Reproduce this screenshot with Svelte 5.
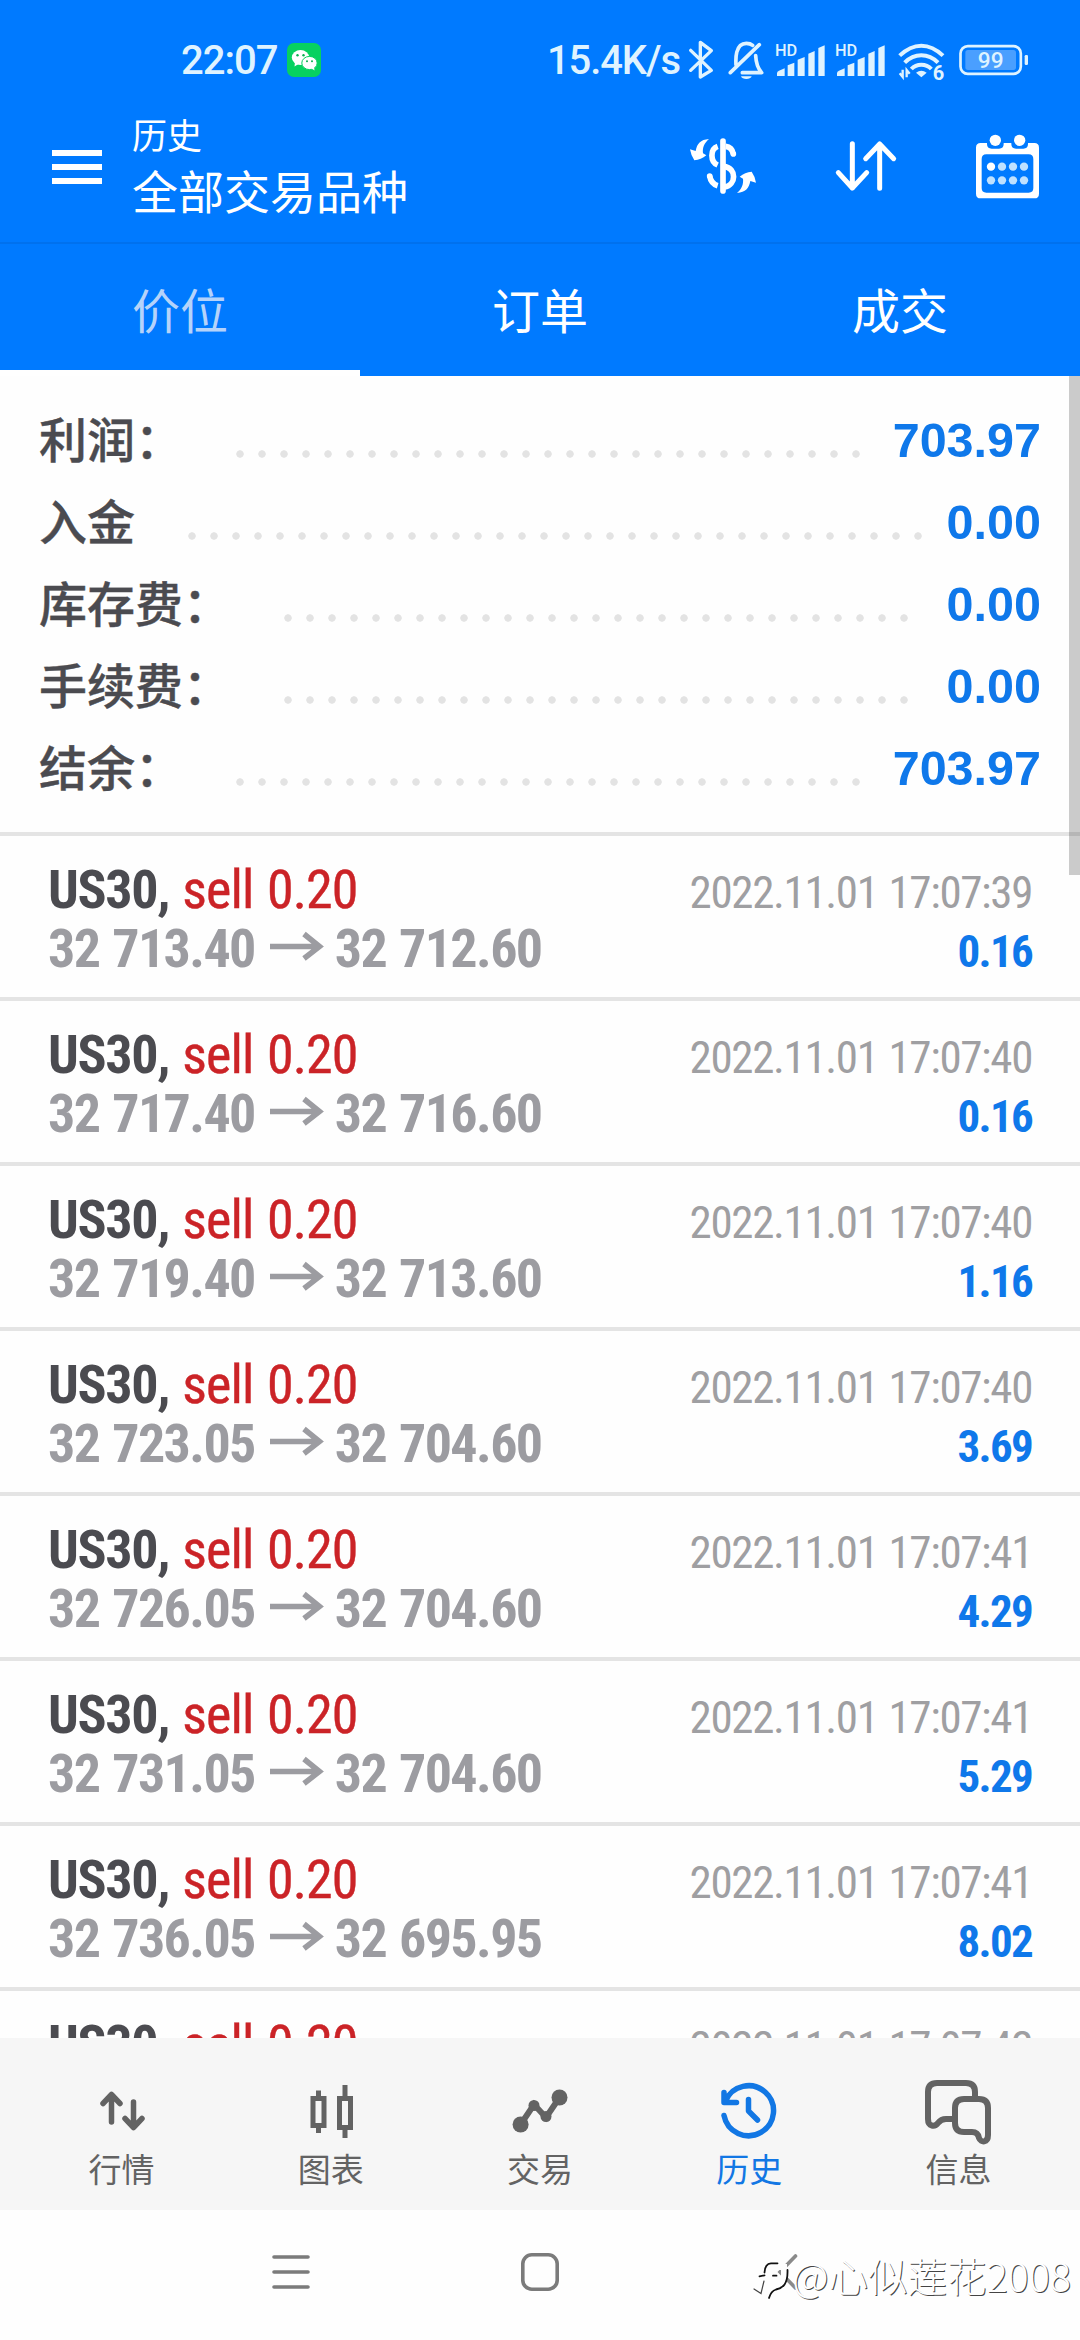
<script>
	const summary = [
		{ label: '利润：', value: '703.97', dots: 29 },
		{ label: '入金', value: '0.00', dots: 34 },
		{ label: '库存费：', value: '0.00', dots: 29 },
		{ label: '手续费：', value: '0.00', dots: 29 },
		{ label: '结余：', value: '703.97', dots: 29 }
	];

	const deals = [
		{ open: '32 713.40', close: '32 712.60', time: '2022.11.01 17:07:39', profit: '0.16' },
		{ open: '32 717.40', close: '32 716.60', time: '2022.11.01 17:07:40', profit: '0.16' },
		{ open: '32 719.40', close: '32 713.60', time: '2022.11.01 17:07:40', profit: '1.16' },
		{ open: '32 723.05', close: '32 704.60', time: '2022.11.01 17:07:40', profit: '3.69' },
		{ open: '32 726.05', close: '32 704.60', time: '2022.11.01 17:07:41', profit: '4.29' },
		{ open: '32 731.05', close: '32 704.60', time: '2022.11.01 17:07:41', profit: '5.29' },
		{ open: '32 736.05', close: '32 695.95', time: '2022.11.01 17:07:41', profit: '8.02' },
		{ open: '', close: '', time: '2022.11.01 17:07:42', profit: '' }
	];

	const tabs = ['价位', '订单', '成交'];
	let activeTab = $state(0);
</script>

{#snippet signal()}
	<svg width="50" height="42" viewBox="0 0 150 126" fill="currentColor">
		<text x="0" y="52" class="hd">HD</text>
		<path
			d="M6 103Q6 97 12 95L29 88V111H6zM38 79L58 71V111H38zM68 62L89 54V111H68zM100 44L119 36V111H100zM130 27L149 19V111H130z"
		/>
	</svg>
{/snippet}

<div class="screen">
	<!-- System status bar -->
	<div class="status">
		<span class="clock">22:07</span>
		<svg class="wechat" width="34" height="34" viewBox="0 0 34 34">
			<rect width="34" height="34" rx="7" fill="#07d160" />
			<ellipse cx="13.5" cy="14.5" rx="8.7" ry="7.5" fill="#fff" />
			<path d="M8 19l-.5 4.5 4-2.5z" fill="#fff" />
			<ellipse cx="22.5" cy="20" rx="7.7" ry="6.6" fill="#fff" stroke="#07d160" stroke-width="1" />
			<path d="M24 25l3.5 2.5-.5-4z" fill="#fff" />
			<g fill="#07b050">
				<circle cx="10.5" cy="12.3" r="1.2" />
				<circle cx="16.5" cy="12.3" r="1.2" />
				<circle cx="20" cy="18.3" r="1" />
				<circle cx="25" cy="18.3" r="1" />
			</g>
		</svg>
		<div class="indicators">
			<span class="speed">15.4K/s</span>
			<svg width="28" height="42" viewBox="0 0 84 126" fill="none" stroke="currentColor">
				<path d="M11 34 73 94 40 114V10L73 35 11 94" stroke-width="10" stroke-linejoin="round" stroke-linecap="round" />
			</svg>
			<svg class="bell" width="38" height="42" viewBox="0 0 114 126" fill="none" stroke="currentColor" stroke-width="11">
				<path d="M10 101 97 17M27 78C26 62 24 13 58 13q12 0 19 6M86 50C87 70 90 86 104 101H46" stroke-linecap="round" stroke-linejoin="round" />
				<path d="M42 112h32c-3 11-29 11-32 0z" fill="currentColor" stroke="none" />
			</svg>
			{@render signal()}
			{@render signal()}
			<svg class="wifi" width="48" height="42" viewBox="0 0 144 126" fill="none" stroke="currentColor" stroke-width="12">
				<path d="M5 50Q36 20 70 20T135 50M20 71Q42 49 70 49T120 71M40 90Q52 77 70 77T100 90" />
				<path d="M54 101Q70 90 86 101L70 115z" fill="currentColor" stroke="none" />
				<path d="M14 92v22L5 103M26 115V93l9 11" stroke-width="7" />
				<text x="104" y="124" class="six">6</text>
			</svg>
			<svg width="71" height="42" viewBox="0 0 213 126" fill="none">
				<rect x="7.5" y="21.5" width="181" height="83" rx="22" stroke="currentColor" stroke-width="8" />
				<rect x="22" y="33" width="152" height="60" rx="8" fill="#4a9fff" />
				<rect x="200" y="48" width="10" height="30" rx="4" fill="currentColor" />
				<text x="98" y="87" class="charge">99</text>
			</svg>
		</div>
	</div>

	<header class="toolbar">
		<div class="burger"><i></i><i></i><i></i></div>
		<div class="titles">
			<div class="title">历史</div>
			<div class="subtitle">全部交易品种</div>
		</div>
		<div class="actions">
			<svg width="68" height="58" viewBox="0 0 204 174" fill="none" stroke="#fff" stroke-width="17">
				<path d="M102 12V162" stroke-linecap="round" />
				<path d="M86 28C63 36 63 74 86 84M110 28Q129 30 133 51M106 88C143 94 143 144 106 150M62 117Q66 140 86 146" />
				<circle cx="133" cy="51" r="8.5" fill="#fff" stroke="none" />
				<circle cx="62" cy="117" r="8.5" fill="#fff" stroke="none" />
				<g fill="#fff" stroke="none">
					<path d="M60 6C34 8 24 20 20 42L3 37Q6 56 16 70 36 68 52 55L42 49C40 32 46 18 60 6z" />
					<path d="M60 6C34 8 24 20 20 42L3 37Q6 56 16 70 36 68 52 55L42 49C40 32 46 18 60 6z" transform="rotate(180 102 87)" />
				</g>
			</svg>
			<svg width="62" height="54" viewBox="0 0 186 162" fill="none" stroke="#fff" stroke-width="15" stroke-linecap="round" stroke-linejoin="round">
				<path d="M52 14V147M10 101 52 147 95 101M134 148V15M92 59 134 15 176 59" />
			</svg>
			<svg width="65" height="65" viewBox="0 0 195 195" fill="#fff">
				<path fill-rule="evenodd" d="M17 27H178Q192 27 192 41V179Q192 193 178 193H17Q3 193 3 179V41Q3 27 17 27zM34 61Q20 61 20 75V162Q20 176 34 176H161Q175 176 175 162V75Q175 61 161 61z" />
				<path d="M36 20h50v10q0 14-14 14H50q-14 0-14-14zM109 20h50v10q0 14-14 14h-22q-14 0-14-14z" fill="#007aff" />
				<circle cx="61" cy="19" r="17" />
				<circle cx="134" cy="19" r="17" />
				<circle cx="48" cy="98" r="12.5" />
				<g fill="#bfe1ff">
					<circle cx="81" cy="98" r="12.5" />
					<circle cx="114" cy="98" r="12.5" />
					<circle cx="147" cy="98" r="12.5" />
					<circle cx="48" cy="139" r="12.5" />
					<circle cx="81" cy="139" r="12.5" />
					<circle cx="114" cy="139" r="12.5" />
					<circle cx="147" cy="139" r="12.5" />
				</g>
			</svg>
		</div>
	</header>

	<nav class="tabs">
		{#each tabs as tab, i}
			<button class="tab" class:active={i === activeTab} onclick={() => (activeTab = i)}>{tab}</button>
		{/each}
	</nav>

	<main>
		<section class="summary">
			{#each summary as row}
				<div class="summary-row">
					<span class="label">{row.label}</span>
					<span class="dots" style="width: {row.dots * 22}px"></span>
					<span class="value">{row.value}</span>
				</div>
			{/each}
		</section>

		{#each deals as deal}
			<article class="deal">
				<div class="line">
					<span class="symbol"><b>US30,</b> <span class="side">sell 0.20</span></span>
					<span class="time">{deal.time}</span>
				</div>
				{#if deal.open}
					<div class="line">
						<span class="prices">
							{deal.open}<svg class="arrow" width="53" height="28" viewBox="0 0 53 28" fill="none" stroke="currentColor" stroke-width="5.5">
								<path d="M0 14.5H49M34 2 49.5 14.5 34 26.5" />
							</svg>{deal.close}
						</span>
						<span class="profit">{deal.profit}</span>
					</div>
				{/if}
			</article>
		{/each}
		<div class="scrollbar"></div>
	</main>

	<nav class="bottom">
		<div class="item">
			<svg width="60" height="64" viewBox="0 0 60 64" fill="none" stroke="currentColor" stroke-width="5.5" stroke-linecap="round" stroke-linejoin="round">
				<path d="M19.5 13V40M11 21.5 19.5 12.5 28 21.5M41.5 20V45M33 36.5 41.5 45.5 50 36.5" />
			</svg>
			<span>行情</span>
		</div>
		<div class="item">
			<svg width="60" height="64" viewBox="0 0 60 64" fill="none" stroke="currentColor" stroke-width="5">
				<path d="M12 16.5H23V43.5H12zM17.5 8.5V16M17.5 44V51M38.5 16.5H49.5V45.5H38.5zM44 3V16M44 46V56" />
			</svg>
			<span>图表</span>
		</div>
		<div class="item">
			<svg width="60" height="64" viewBox="0 0 60 64" fill="currentColor">
				<path d="M10.6 42.5 24 22.5 36 35.5 49.5 15.5" fill="none" stroke="currentColor" stroke-width="6" />
				<circle cx="10.6" cy="42.5" r="8" />
				<circle cx="24" cy="23.5" r="5.5" />
				<circle cx="36" cy="34.5" r="5.5" />
				<circle cx="49.5" cy="15.5" r="8" />
			</svg>
			<span>交易</span>
		</div>
		<div class="item current">
			<svg width="60" height="64" viewBox="0 0 60 64" fill="none" stroke="currentColor" stroke-width="5.5" stroke-linecap="round" stroke-linejoin="round">
				<path d="M5 33.5A25 25 0 1 0 6.5 19M5 10.5V20.5H17.5M29.5 17.5V29L38.5 38" />
			</svg>
			<span>历史</span>
		</div>
		<div class="item">
			<svg width="60" height="64" viewBox="0 0 60 64" fill="none" stroke="currentColor" stroke-width="6">
				<path d="M47 17V10Q47 1 38 1H9Q0 1 0 10V37C0 45 7 45 10 41Q13 37 18 37H27" />
				<path d="M36 17H51Q60 17 60 26V53C60 61 53 61 51 56Q50 50 44 50H36Q27 50 27 41V26Q27 17 36 17z" />
			</svg>
			<span>信息</span>
		</div>
	</nav>

	<!-- Gesture / key navigation -->
	<footer class="keys">
		<svg width="38" height="38" viewBox="0 0 38 38" stroke="#7b7b7b" stroke-width="3.6" stroke-linecap="round">
			<path d="M2 4H36M2 19H36M2 34H36" />
		</svg>
		<svg width="38" height="38" viewBox="0 0 38 38" fill="none" stroke="#7b7b7b" stroke-width="3.6">
			<rect x="1.8" y="1.8" width="34.4" height="34.4" rx="9" />
		</svg>
		<svg width="38" height="38" viewBox="0 0 38 38" fill="none" stroke="#8a8a8a" stroke-width="3.6" stroke-linecap="round">
			<path d="M25.5 3 10 19 25.5 35" />
		</svg>
		<div class="watermark">
			<svg width="38" height="50" viewBox="0 0 38 50" fill="none" stroke-linecap="round">
				<path d="M3 39 12 28M14 25Q14 17 21 17H30V28Q28 40 18 44" stroke="#fefefe" stroke-width="6" />
				<path d="M10.5 22.5Q11 13.500 17 13.300H23.500M5.500 26.300 10.500 25.300M19 25.700H22.500M33.500 20C34 34 29 38 22 39.500Q17 41 15 48" stroke="#111" stroke-width="1.800" />
				<path d="M0 39 7 43.500 10 31" stroke="#444" stroke-width="1.200" />
			</svg>
			<span>@心似莲花2008</span>
		</div>
	</footer>
</div>

<style>
	:global(body) {
		margin: 0;
	}

	.screen {
		display: flex;
		flex-direction: column;
		width: 1080px;
		height: 2340px;
		overflow: hidden;
		background: #fefefe;
		font-family: Roboto, 'Noto Sans CJK SC', sans-serif;
	}

	svg {
		display: block;
		flex-shrink: 0;
		overflow: visible;
	}

	.status {
		display: flex;
		align-items: center;
		height: 84px;
		padding: 36px 51px 0 181px;
		box-sizing: border-box;
		background: #007aff;
		color: #dff3ff;
		font-size: 40px;
		font-weight: 500;
	}

	.clock {
		letter-spacing: -1px;
	}

	.wechat {
		margin-left: 10px;
	}

	.indicators {
		display: flex;
		align-items: center;
		gap: 10px;
		margin-left: auto;
	}

	.speed {
		letter-spacing: -1.1px;
		margin-right: -3px;
	}

	.bell {
		margin-left: 2px;
	}

	.wifi {
		margin: 0 2px 0 3px;
	}

	.hd {
		font-size: 49px;
		font-weight: 500;
	}

	.six {
		font-size: 60px;
		font-weight: 700;
		fill: currentColor;
		stroke: none;
	}

	.charge {
		font-size: 68px;
		font-weight: 500;
		text-anchor: middle;
		fill: currentColor;
	}

	.toolbar {
		display: flex;
		height: 160px;
		padding: 0 40px 0 52px;
		box-sizing: border-box;
		border-bottom: 2px solid #0071ee;
		background: #007aff;
		color: #fff;
	}

	.burger {
		display: flex;
		flex-direction: column;
		gap: 8px;
		margin-top: 66px;
	}

	.burger i {
		width: 50px;
		height: 6px;
		background: #fff;
	}

	.titles {
		margin: 30px 0 0 30px;
	}

	.title {
		font-size: 35px;
		line-height: 48px;
	}

	.subtitle {
		font-size: 46px;
		line-height: 62px;
	}

	.actions {
		display: flex;
		align-items: center;
		gap: 78px;
		margin-left: auto;
		padding-top: 8px;
		height: 156px;
		box-sizing: border-box;
	}

	.tabs {
		display: flex;
		height: 132px;
		background: #007aff;
	}

	.tab {
		flex: 1;
		padding: 1px 0 0;
		border: none;
		border-bottom: 6px solid transparent;
		background: none;
		color: #fff;
		font: inherit;
		font-size: 48px;
	}

	.tab.active {
		border-bottom-color: #fff;
		color: #b5d3fa;
	}

	main {
		position: relative;
		height: 1662px;
		overflow: hidden;
	}

	.summary {
		padding: 23px 40px;
		border-bottom: 4px solid #e4e4e4;
	}

	.summary-row {
		display: flex;
		align-items: center;
		height: 82px;
		font-size: 48px;
	}

	.label {
		margin: -6px 0 0 -1px;
		color: #4b4b50;
		font-weight: 500;
		-webkit-text-stroke: 0.4px #4b4b50;
	}

	/* one dot per 22px tile */
	.dots {
		height: 8px;
		margin: 28px 0 0 46px;
		background: radial-gradient(circle at 11px 4px, #e3e3e3 3.4px, transparent 4px) 0 0 / 22px 8px repeat-x;
	}

	.value {
		margin-left: auto;
		margin-right: -1px;
		color: #0f78ea;
		font-family: 'Liberation Sans', Arial, sans-serif;
		font-size: 48.5px;
		font-weight: 700;
	}

	.deal {
		height: 165px;
		padding: 24px 48px 0;
		box-sizing: border-box;
		border-bottom: 4px solid #e4e4e4;
		font-family: 'Roboto Condensed', Roboto, sans-serif;
	}

	.line {
		display: flex;
		justify-content: space-between;
		align-items: baseline;
		height: 59px;
		line-height: 59px;
		white-space: nowrap;
	}

	.symbol,
	.prices {
		font-size: 54px;
		letter-spacing: -1.3px;
	}

	.symbol {
		color: #4b4b50;
		word-spacing: 2px;
	}

	.side {
		color: #cb2327;
		letter-spacing: -0.9px;
		word-spacing: 2px;
		-webkit-text-stroke: 0.4px #cb2327;
	}

	.prices {
		color: #9c9ca1;
		font-weight: 700;
		letter-spacing: -1.6px;
		word-spacing: 2px;
	}

	.arrow {
		display: inline-block;
		margin: 0 12px 0 15px;
		vertical-align: 7px;
	}

	.time {
		color: #9f9fa2;
		font-size: 45px;
		letter-spacing: -1.35px;
		word-spacing: 2px;
	}

	.profit {
		color: #0f78ea;
		font-size: 45px;
		font-weight: 700;
		letter-spacing: -1.7px;
	}

	.scrollbar {
		position: absolute;
		top: 0;
		right: 0;
		width: 11px;
		height: 499px;
		background: rgba(0, 0, 0, 0.2);
	}

	.bottom {
		display: flex;
		height: 172px;
		padding: 0 17px;
		background: #f6f6f6;
		color: #636363;
	}

	.item {
		display: flex;
		flex: 1;
		flex-direction: column;
		align-items: center;
		padding-top: 44px;
		font-size: 33px;
		line-height: 49px;
	}

	.item.current {
		color: #1277e4;
	}

	.keys {
		position: relative;
		display: flex;
		flex: 1;
		justify-content: center;
		gap: 211px;
		padding-top: 43px;
	}

	.watermark {
		position: absolute;
		top: 36px;
		right: 9px;
		display: flex;
		align-items: center;
		gap: 1px;
		color: #fff;
		font-family: 'Noto Sans CJK SC', sans-serif;
		font-size: 39.5px;
		font-weight: 300;
		text-shadow: 1px 1px 0 #444;
		white-space: nowrap;
	}
</style>
